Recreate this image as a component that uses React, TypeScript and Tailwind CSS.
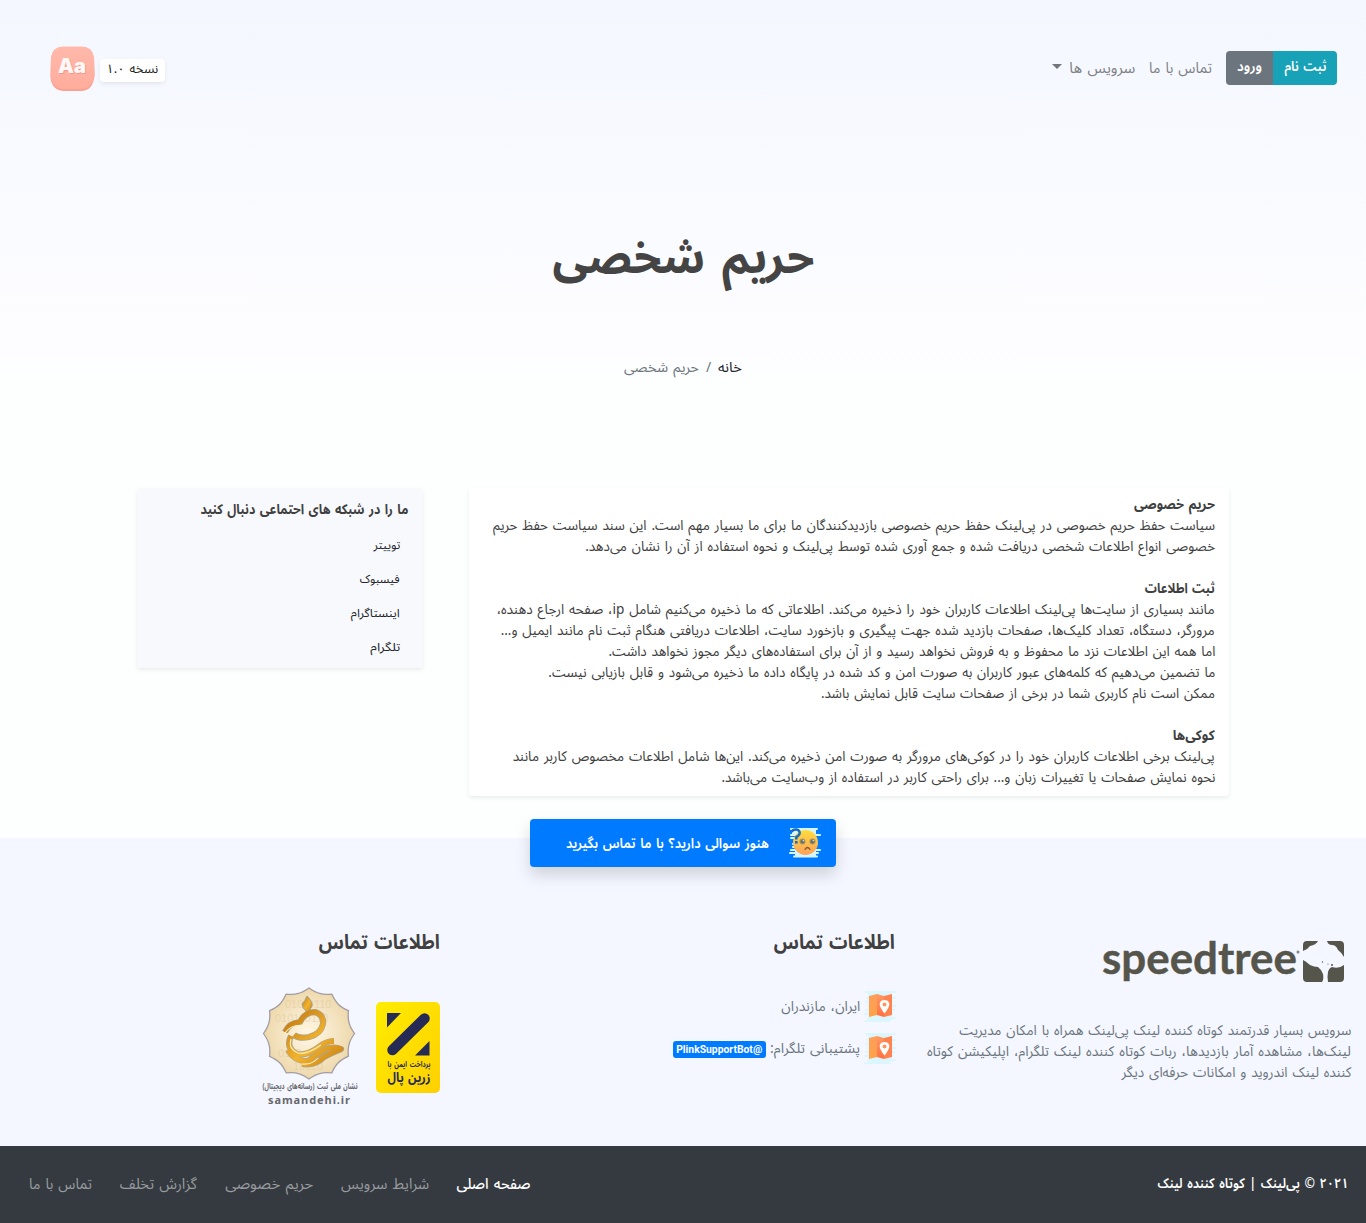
import { useLayoutEffect, useRef, useState, type ReactNode } from 'react';

/* A single line of text whose glyphs are condensed to the width of its box. */
function Line({ className = '', children }: { className?: string; children: ReactNode }) {
  const outer = useRef<HTMLSpanElement>(null);
  const inner = useRef<HTMLSpanElement>(null);
  const [scale, setScale] = useState(1);
  useLayoutEffect(() => {
    if (outer.current && inner.current && inner.current.offsetWidth) {
      setScale(outer.current.offsetWidth / inner.current.getBoundingClientRect().width);
    }
  }, []);
  return (
    <span ref={outer} className={'block h-[21px] shrink-0 whitespace-nowrap ' + className}>
      <span ref={inner} className="inline-block origin-right align-top" style={{ transform: `scaleX(${scale})` }}>
        {children}
      </span>
    </span>
  );
}

function AppLogo() {
  return (
    <svg width="46" height="46" viewBox="0 0 46 46" direction="ltr">
      <defs>
        <linearGradient id="peach" x1="0" y1="0" x2="0" y2="1">
          <stop offset="0" stopColor="#ffb9aa" />
          <stop offset="1" stopColor="#ffac9c" />
        </linearGradient>
      </defs>
      <path d="M13 2H32Q42 2 44 13L44.500 31Q43 45 32 46H13Q2 45 .5 33L1 13Q3 2 13 2Z" fill="#f9a292" />
      <path d="M13 1.500H32Q42 1.500 44 12L44.500 30Q43 43 32 44H13Q2 43 .5 31L1 12Q3 1.500 13 1.500Z" fill="url(#peach)" />
      <g fontFamily="Inter" fontWeight="900" fontSize="20">
        <text x="9" y="29" textLength="28" lengthAdjust="spacingAndGlyphs" fill="#ee7f77" opacity=".5">Aa</text>
        <text x="8" y="27.500" textLength="28" lengthAdjust="spacingAndGlyphs" fill="#fff7f6">Aa</text>
      </g>
    </svg>
  );
}

function ConfusedFace() {
  return (
    <svg width="34" height="32" viewBox="0 0 34 32">
      <path d="M3 2H29M3 8H32M3 11H27M5 17H29M5 20H27M3 23H32M2 26H30M6 29.500H29" stroke="#d5f6fc" strokeWidth="2" strokeLinecap="round" />
      <path d="M4 2H28V29H7V8H4Z" fill="#d5f6fc" />
      <defs>
        <linearGradient id="face" x1="0" y1="0" x2="0" y2="1">
          <stop offset="0" stopColor="#ffdc3d" />
          <stop offset="1" stopColor="#ffa15a" />
        </linearGradient>
      </defs>
      <circle cx="17.500" cy="15.500" r="12.500" fill="url(#face)" />
      <circle cx="14.500" cy="14.500" r="3" fill="#a59455" />
      <circle cx="24.500" cy="14.500" r="3" fill="#a59455" />
      <circle cx="14.500" cy="14.500" r="1.800" fill="#5d6672" />
      <circle cx="24.500" cy="14.500" r="1.800" fill="#5d6672" />
      <circle cx="15.200" cy="13.800" r=".7" fill="#fff" />
      <circle cx="25.200" cy="13.800" r=".7" fill="#fff" />
      <path d="M17 22.500Q19.500 18.500 22 22.500" fill="none" stroke="#855c38" strokeWidth="1.300" strokeLinecap="round" />
      <path d="M3.500 5Q5 2 8.500 2.500Q12.500 3.500 11.500 7Q10.500 9 8.300 10V12.500" fill="none" stroke="#176dc5" strokeWidth="2.500" />
      <rect x="7" y="14" width="2.600" height="2.600" fill="#176dc5" />
    </svg>
  );
}

function MapPin() {
  return (
    <svg width="32" height="32" viewBox="0 0 32 32" className="shrink-0">
      <path d="M2 2H31M5 5H27M3 8H31M2 12H28M4 16H31M2 20H30M1 24H28M4 28H31M1 31H26" stroke="#dcf6fe" strokeWidth="2" strokeLinecap="round" />
      <path d="M4 3H28V30H4Z" fill="#dcf6fe" />
      <defs>
        <linearGradient id="mapa" x1="0" y1="0" x2="0" y2="1">
          <stop offset="0" stopColor="#ff9d5b" />
          <stop offset="1" stopColor="#ffa347" />
        </linearGradient>
        <linearGradient id="mapb" x1="0" y1="0" x2="0" y2="1">
          <stop offset="0" stopColor="#ff9a62" />
          <stop offset="1" stopColor="#ff7043" />
        </linearGradient>
      </defs>
      <path d="M5 6L13 4V25L5 27Z" fill="url(#mapa)" />
      <path d="M13 4L20 6V27L13 25Z" fill="url(#mapb)" />
      <path d="M20 6L28 4V25L20 27Z" fill="#ff824f" />
      <path d="M20.500 10C16.500 10 15 13 16 16C17 19 20.500 23.500 20.500 23.500C20.500 23.500 24 19 25 16C26 13 24.500 10 20.500 10Z" fill="#fff" />
      <circle cx="20.500" cy="14.500" r="2" fill="#ff9460" />
    </svg>
  );
}

function SpeedTree() {
  return (
    <svg width="244" height="46" viewBox="0 0 244 46" direction="ltr" className="overflow-visible">
      <text x="1" y="37" fontFamily="Lato" fontWeight="700" fontSize="43" textLength="195" lengthAdjust="spacingAndGlyphs" fill="#55554b" stroke="#55554b" strokeWidth=".4">speedtree</text>
      <circle cx="197" cy="15" r="1.500" fill="#85857f" />
      <path d="M206 4H217Q215 8 209 9Q206 13 202 14V8Q202 4 206 4Z" fill="#55554b" />
      <path d="M226 4H239Q243 4 243 8V20Q240 15 237 13Q235 8 231 8Q227 8 226 4Z" fill="#55554b" />
      <path d="M202 23Q206 25 209 28Q213 30 217 30Q221 33 222 37Q223 42 221 45H206Q202 45 202 41Z" fill="#55554b" />
      <path d="M243 28V41Q243 45 239 45H227Q226 40 227 35Q228 31 231 30Q238 32 243 28Z" fill="#55554b" />
      <g fill="#55554b"><circle cx="221.500" cy="25" r=".7" /><circle cx="227" cy="27" r=".6" /><circle cx="231" cy="28" r="1" /></g>
    </svg>
  );
}

function ZarinPal() {
  return (
    <svg width="64" height="91" viewBox="0 0 64 91" className="overflow-visible">
      <defs>
        <linearGradient id="gold" x1="0" y1="0" x2="1" y2="1">
          <stop offset="0" stopColor="#ffec00" />
          <stop offset="1" stopColor="#ffd000" />
        </linearGradient>
      </defs>
      <rect width="64" height="91" rx="5" fill="url(#gold)" />
      <path d="M16.500 48L48.500 16.500" stroke="#262b55" strokeWidth="10.500" strokeLinecap="round" />
      <path d="M11 11H25L11 25.500Z" fill="#262b55" />
      <path d="M53.500 39V53.500H39Z" fill="#262b55" />
      <g fill="#262b55" fontFamily="Noto Sans Arabic, DejaVu Sans" fontWeight="700" direction="rtl" textAnchor="middle">
        <text x="33" y="65" fontSize="8" textLength="43" lengthAdjust="spacingAndGlyphs">پرداخت ایمن با</text>
        <text x="33" y="80" fontSize="13" textLength="43" lengthAdjust="spacingAndGlyphs">زرین پال</text>
      </g>
    </svg>
  );
}

function Samandehi() {
  const scallops = Array.from({ length: 12 }, (_, i) => i * 30);
  const pt = (deg: number, r: number) =>
    `${(48 + r * Math.sin((deg * Math.PI) / 180)).toFixed(1)} ${(46.5 - r * Math.cos((deg * Math.PI) / 180)).toFixed(1)}`;
  const badge = 'M' + pt(0, 45.5) + scallops.map((a) => `Q${pt(a + 9, 41.5)} ${pt(a + 15, 41.5)}Q${pt(a + 21, 41.5)} ${pt(a + 30, 45.5)}`).join('') + 'Z';
  return (
    <svg width="98" height="120" viewBox="0 0 98 120" direction="ltr" className="overflow-visible">
      <defs>
        <radialGradient id="cream">
          <stop offset="0" stopColor="#fff8e7" />
          <stop offset="1" stopColor="#eed8ab" />
        </radialGradient>
        <linearGradient id="amber" x1="0" y1="0" x2="1" y2="1">
          <stop offset="0" stopColor="#bd7310" />
          <stop offset=".55" stopColor="#f3b42d" />
          <stop offset="1" stopColor="#c77d12" />
        </linearGradient>
      </defs>
      <path d={badge} fill="url(#cream)" stroke="#a39da3" strokeWidth="1.300" />
      <g fill="#dfc99c" fontFamily="Liberation Sans" fontSize="11" opacity=".5">
        <text x="24" y="21">010 9110</text>
        <text x="14" y="35">010110110</text>
        <text x="17" y="70">0110 1010</text>
        <text x="32" y="83">10110</text>
      </g>
      <path d="M46 9Q52 15 51 19Q49 24 46 25Q41 21 41 17Q44 14 46 9Z" fill="url(#amber)" stroke="#a6a18d" strokeWidth="1" />
      <path d="M24 45Q28 36 39 35Q44 25 54 25Q63 28 62 37Q60 47 48 50Q38 52 33 48M30 49Q24 61 36 67Q46 69 58 60Q65 54 73 54M27 63Q34 75 47 74Q58 66 65 62Q73 59 80 62Q70 66 63 70Q54 79 41 77" fill="none" stroke="#aaa58f" strokeWidth="6.200" strokeLinejoin="round" />
      <path d="M24 45Q28 36 39 35Q44 25 54 25Q63 28 62 37Q60 47 48 50Q38 52 33 48M30 49Q24 61 36 67Q46 69 58 60Q65 54 73 54M27 63Q34 75 47 74Q58 66 65 62Q73 59 80 62Q70 66 63 70Q54 79 41 77" fill="none" stroke="url(#amber)" strokeWidth="4.800" strokeLinejoin="round" />
      <path d="M24 46Q31 36 46 39Q51 40 55 43M30 52Q27 62 37 66Q46 68 60 58M41 77Q51 78 57 71" fill="none" stroke="#fff0c5" strokeWidth="1.100" />
      <text x="49" y="102" textAnchor="middle" direction="rtl" fontFamily="Noto Sans Arabic, DejaVu Sans" fontWeight="700" fontSize="8.500" textLength="95" lengthAdjust="spacingAndGlyphs" fill="#66666b">نشان ملی ثبت (رسانه‌های دیجیتال)</text>
      <text x="7" y="117" fontFamily="Noto Sans" fontWeight="700" fontSize="11" textLength="82" fill="#68686d">samandehi.ir</text>
    </svg>
  );
}

const social = [
  { label: 'توییتر', w: 'w-[27px]' },
  { label: 'فیسبوک', w: 'w-[40px]' },
  { label: 'اینستاگرام', w: 'w-[49px]' },
  { label: 'تلگرام', w: 'w-[30px]' },
];

export default function App() {
  return (
    <div dir="rtl" className="flex h-[1223px] w-[1366px] flex-col bg-[#fdfffe] font-['Noto_Sans_Arabic','Vazirmatn','DejaVu_Sans',sans-serif] text-[14px] leading-[21px] [word-spacing:0.1em] text-[#404040]">
      <header className="h-[488px] shrink-0 bg-linear-to-b from-[#f4f7ff] via-[#fdfdff] via-[345px] to-[#fdfffe] to-[400px]">
        <nav className="flex h-[136px] items-center justify-between pr-[29px] pl-[50px]">
          <div className="flex items-center">
            <div className="flex h-[34px] overflow-hidden rounded-[4px] font-semibold text-white">
              <a className="flex w-[64px] justify-center bg-[#17a2b8] pt-[5px]"><Line className="w-[42px]">ثبت نام</Line></a>
              <a className="flex w-[47px] justify-center bg-[#6c757d] pt-[5px]"><Line className="w-[25px]">ورود</Line></a>
            </div>
            <div className="mr-[14px] flex items-center gap-[14px] text-[15px] text-[#7d8084]">
              <Line className="w-[63px]">تماس با ما</Line>
              <Line className="w-[66px]">سرویس ها</Line>
            </div>
            <i className="mr-[7px] mb-[3px] border-x-[5px] border-t-[5px] border-x-transparent border-t-[#73777b]" />
          </div>
          <div dir="ltr" className="flex items-center gap-[4px]">
            <AppLogo />
            <div dir="rtl" className="mt-[4px] flex h-[23px] w-[65px] justify-center rounded-[4px] bg-white text-[12.500px] text-[#222] shadow-[0_2px_4px_rgba(0,0,0,.075)]">
              <Line className="w-[52px]">نسخه ۱.۰</Line>
            </div>
          </div>
        </nav>
        <h1 className="mt-[87px] flex justify-center text-[46px] leading-[72px] font-bold [word-spacing:0.12em] text-[#444]"><Line className="h-[72px] w-[262px]">حریم شخصی</Line></h1>
        <div className="mt-[62px] flex justify-center gap-[7px]">
          <Line className="w-[24px] text-[#212529]">خانه</Line>
          <span className="[word-spacing:0] text-[#6c757d]">/</span>
          <Line className="w-[75px] text-[#6c757d]">حریم شخصی</Line>
        </div>
      </header>

      <main className="flex h-[350px] shrink-0 items-start gap-[46px] pr-[137px]">
        <article className="h-[308px] w-[760px] rounded-[4px] bg-[#fefffe] pt-[6px] pr-[14px] shadow-[0_2px_4px_rgba(0,0,0,.075)]">
          <Line className="w-[81px] font-bold">حریم خصوصی</Line>
          <Line className="w-[722px]">سیاست حفظ حریم خصوصی در پی‌لینک حفظ حریم خصوصی بازدیدکنندگان ما برای ما بسیار مهم است. این سند سیاست حفظ حریم</Line>
          <Line className="w-[630px]">خصوصی انواع اطلاعات شخصی دریافت شده و جمع آوری شده توسط پی‌لینک و نحوه استفاده از آن را نشان می‌دهد.</Line>
          <Line className="mt-[21px] w-[70px] font-bold">ثبت اطلاعات</Line>
          <Line className="w-[718px]">مانند بسیاری از سایت‌ها پی‌لینک اطلاعات کاربران خود را ذخیره می‌کند. اطلاعاتی که ما ذخیره می‌کنیم شامل ip، صفحه ارجاع دهنده،</Line>
          <Line className="w-[714px]">مرورگر، دستگاه، تعداد کلیک‌ها، صفحات بازدید شده جهت پیگیری و بازخورد سایت، اطلاعات دریافتی هنگام ثبت نام مانند ایمیل و...</Line>
          <Line className="w-[607px]">اما همه این اطلاعات نزد ما محفوظ و به فروش نخواهد رسید و از آن برای استفاده‌های دیگر مجوز نخواهد داشت.</Line>
          <Line className="w-[667px]">ما تضمین می‌دهیم که کلمه‌های عبور کاربران به صورت امن و کد شده در پایگاه داده ما ذخیره می‌شود و قابل بازیابی نیست.</Line>
          <Line className="w-[394px]">ممکن است نام کاربری شما در برخی از صفحات سایت قابل نمایش باشد.</Line>
          <Line className="mt-[21px] w-[42px] font-bold">کوکی‌ها</Line>
          <Line className="w-[702px]">پی‌لینک برخی اطلاعات کاربران خود را در کوکی‌های مرورگر به صورت امن ذخیره می‌کند. این‌ها شامل اطلاعات مخصوص کاربر مانند</Line>
          <Line className="w-[494px]">نحوه نمایش صفحات یا تغییرات زبان و... برای راحتی کاربر در استفاده از وب‌سایت می‌باشد.</Line>
        </article>
        <aside className="h-[180px] w-[286px] rounded-[4px] bg-[#f8f9fc] pt-[11px] pr-[15px] shadow-[0_2px_4px_rgba(0,0,0,.075)]">
          <Line className="w-[208px] font-bold">ما را در شبکه های احتماعی دنبال کنید</Line>
          <ul className="mt-[15px] flex flex-col gap-[13px] pr-[8px] text-[11.500px] text-[#212529]">
            {social.map((s) => <li key={s.label}><Line className={s.w}>{s.label}</Line></li>)}
          </ul>
        </aside>
      </main>

      <footer className="flex flex-1 flex-col bg-[#f4f7ff]">
        <a className="relative z-10 mx-auto -mt-[19px] flex h-[48px] w-[306px] shrink-0 items-center rounded-[4px] bg-[#007bff] pr-[14px] text-white shadow-[0_8px_16px_rgba(0,0,0,.15)]">
          <ConfusedFace />
          <Line className="mr-[19px] w-[203px] font-semibold">هنوز سوالی دارید؟ با ما تماس بگیرید</Line>
        </a>
        <div className="flex h-[279px] shrink-0">
          <section className="w-[456px] pr-[15px]">
            <div className="mt-[70px] mr-[6px]"><SpeedTree /></div>
            <div className="mt-[37px] text-[#6c757d]">
              <Line className="w-[392px]">سرویس بسیار قدرتمند کوتاه کننده لینک پی‌لینک همراه با امکان مدیریت</Line>
              <Line className="w-[424px]">لینک‌ها، مشاهده آمار بازدیدها، ربات کوتاه کننده لینک تلگرام، اپلیکیشن کوتاه</Line>
              <Line className="w-[230px]">کننده لینک اندروید و امکانات حرفه‌ای دیگر</Line>
            </div>
          </section>
          <section className="w-[455px] pr-[15px]">
            <h2 className="mt-[61px] text-[20px] leading-[30px] font-bold"><Line className="h-[30px] w-[121px]">اطلاعات تماس</Line></h2>
            <ul className="mt-[32px] -mr-[1px] flex flex-col gap-[10px] text-[#6c757d]">
              <li className="flex items-center gap-[4px]"><MapPin /><Line className="w-[79px]">ایران، مازندران</Line></li>
              <li className="flex items-center gap-[4px]">
                <MapPin />
                <Line className="w-[90px]">پشتیبانی تلگرام:</Line>
                <span className="mt-[2px] flex h-[17px] w-[93px] items-center justify-center rounded-[3px] bg-[#007bff] font-['Roboto'] text-[10.500px] font-bold text-white"><Line className="w-[86px]">@PlinkSupportBot</Line></span>
              </li>
            </ul>
          </section>
          <section className="w-[455px] pr-[15px]">
            <h2 className="mt-[61px] text-[20px] leading-[30px] font-bold"><Line className="h-[30px] w-[121px]">اطلاعات تماس</Line></h2>
            <div className="mt-[29px] flex items-start gap-[17px]">
              <div className="mt-[15px]"><ZarinPal /></div>
              <Samandehi />
            </div>
          </section>
        </div>
        <div className="flex flex-1 items-center justify-between bg-[#343a40] pr-[18px] pl-[29px]">
          <Line className="mb-[2px] w-[191px] font-semibold text-white">۲۰۲۱ © پی‌لینک | کوتاه کننده لینک</Line>
          <nav className="flex gap-[28px] text-[15px] text-[#999c9f]">
            <Line className="w-[74px] font-medium text-white">صفحه اصلی</Line>
            <Line className="w-[88px]">شرایط سرویس</Line>
            <Line className="w-[88px]">حریم خصوصی</Line>
            <Line className="w-[77px]">گزارش تخلف</Line>
            <Line className="w-[63px]">تماس با ما</Line>
          </nav>
        </div>
      </footer>
    </div>
  );
}
